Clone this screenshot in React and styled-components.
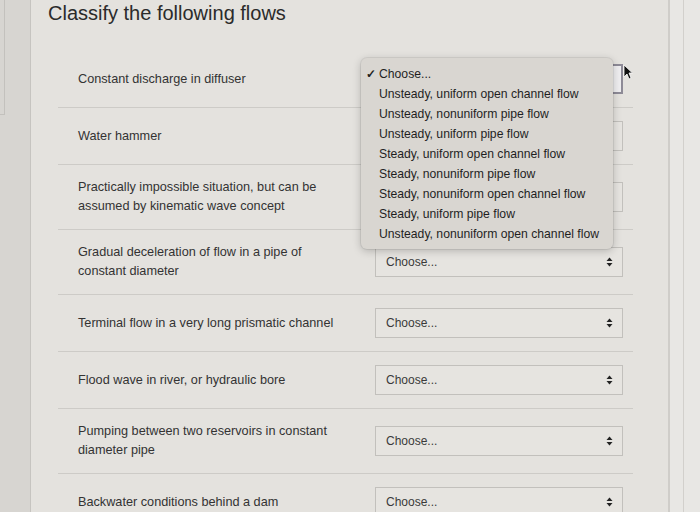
import { createGlobalStyle } from "styled-components";
import styled from "styled-components";

const GlobalStyle = createGlobalStyle`
  html, body {
    margin: 0;
    background: #e3e1dd;
    font-family: "Liberation Sans", Arial, sans-serif;
    color: #2e2e2e;
  }
`;

const Page = styled.div`
  display: flex;
  width: 700px;
  height: 512px;
  overflow: hidden;
`;

const LeftGutter = styled.div`
  flex: 0 0 30px;
  background: #d7d5d1;
  border-right: 1px solid #c6c4c0;
`;

const GutterBox = styled.div`
  width: 4px;
  height: 114px;
  border: 1px solid #c3c1bd;
  border-left: none;
  border-top: none;
`;

const Main = styled.main`
  flex: 0 0 634px;
  background: #e4e2de;
`;

const Title = styled.h1`
  margin: 0;
  padding: 1px 0 0 17px;
  height: 50px;
  font-size: 20px;
  line-height: 24px;
  font-weight: 400;
  color: #2b2b2b;
`;

const List = styled.div`
  margin: 0 35px 0 27px;
`;

const Row = styled.div`
  display: flex;
  align-items: center;
  gap: 27px;
  padding: 13px 10px 13px 20px;
  border-top: ${(p) => (p.$first ? "none" : "1px solid #cdcbc7")};
`;

const Label = styled.div`
  flex: 0 0 270px;
  font-size: 12.7px;
  line-height: 19px;
  color: #333;
`;

const SelectWrap = styled.div`
  position: relative;
  flex: 0 0 248px;
`;

const SelectBox = styled.div`
  box-sizing: border-box;
  height: 30px;
  display: flex;
  align-items: center;
  justify-content: space-between;
  padding: 0 9px 0 10px;
  font-size: 12px;
  color: #3a3a3a;
  background: ${(p) => (p.$focus ? "#efeef0" : "#e6e4e0")};
  border: ${(p) => (p.$focus ? "2px solid #8e8b97" : "1px solid #c2c0bc")};
`;

const Menu = styled.ul`
  position: absolute;
  left: -14px;
  top: -6px;
  width: 252px;
  margin: 0;
  padding: 6px 0 5px;
  list-style: none;
  background: #d9d6d1;
  border-radius: 6px;
  box-shadow: 0 2px 8px rgba(0, 0, 0, 0.22), 0 0 0 1px rgba(0, 0, 0, 0.06);
  z-index: 2;
`;

const MenuItem = styled.li`
  position: relative;
  padding-left: 18px;
  font-size: 12.2px;
  line-height: 20px;
  color: #1f1f1f;
  white-space: nowrap;
`;

const Check = styled.span`
  position: absolute;
  left: 5px;
  top: 0;
  font-weight: 700;
`;

const Cursor = styled.svg`
  position: absolute;
  right: -10px;
  top: 0;
  z-index: 3;
`;

const RightRail = styled.div`
  flex: 1;
  background: #e8e7e4;
  border-left: 2px solid #cfcdc9;
  display: flex;
`;

const RailInner = styled.div`
  margin-left: 13px;
  flex: 1;
  border-left: 1px solid #d2d0cc;
`;

const Arrows = () => (
  <svg width="7" height="10" viewBox="0 0 7 10">
    <path d="M3.5 0.5 L6.5 4 L0.5 4 Z" fill="#222" />
    <path d="M3.5 9.5 L6.5 6 L0.5 6 Z" fill="#222" />
  </svg>
);

const options = [
  "Unsteady, uniform open channel flow",
  "Unsteady, nonuniform pipe flow",
  "Unsteady, uniform pipe flow",
  "Steady, uniform open channel flow",
  "Steady, nonuniform pipe flow",
  "Steady, nonuniform open channel flow",
  "Steady, uniform pipe flow",
  "Unsteady, nonuniform open channel flow",
];

const questions = [
  "Constant discharge in diffuser",
  "Water hammer",
  "Practically impossible situation, but can be assumed by kinematic wave concept",
  "Gradual deceleration of flow in a pipe of constant diameter",
  "Terminal flow in a very long prismatic channel",
  "Flood wave in river, or hydraulic bore",
  "Pumping between two reservoirs in constant diameter pipe",
  "Backwater conditions behind a dam",
];

export default function App() {
  return (
    <>
      <GlobalStyle />
      <Page>
        <LeftGutter>
          <GutterBox />
        </LeftGutter>
        <Main>
          <Title>Classify the following flows</Title>
          <List>
            {questions.map((q, i) => (
              <Row key={q} $first={i === 0}>
                <Label>{q}</Label>
                <SelectWrap>
                  <SelectBox $focus={i === 0}>
                    <span>Choose...</span>
                    <Arrows />
                  </SelectBox>
                  {i === 0 && (
                    <>
                      <Menu>
                        <MenuItem>
                          <Check>✓</Check>Choose...
                        </MenuItem>
                        {options.map((o) => (
                          <MenuItem key={o}>{o}</MenuItem>
                        ))}
                      </Menu>
                      <Cursor width="10" height="16" viewBox="0 0 10 16">
                        <path
                          d="M1 1 L1 13 L4 10 L6 15 L8 14 L6 9 L9.5 9 Z"
                          fill="#111"
                          stroke="#fff"
                          strokeWidth="0.8"
                        />
                      </Cursor>
                    </>
                  )}
                </SelectWrap>
              </Row>
            ))}
          </List>
        </Main>
        <RightRail>
          <RailInner />
        </RightRail>
      </Page>
    </>
  );
}
